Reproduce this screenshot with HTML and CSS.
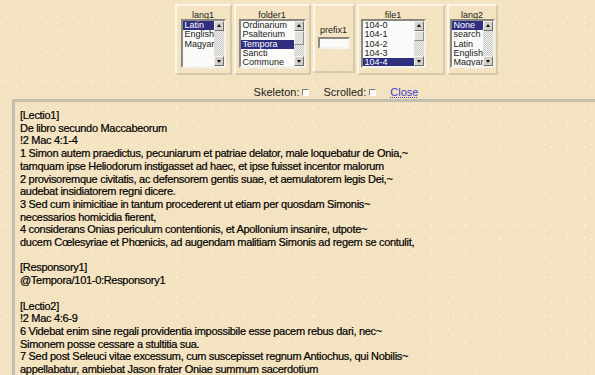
FILE: index.html
```html
<!DOCTYPE html>
<html>
<head>
<meta charset="utf-8">
<link rel="stylesheet" href="styles.css">
</head>
<body>
<div class="page">
  <div class="pick">
    <div class="cell c-lang1">
      <div class="lbl">lang1</div>
      <div class="lb w-lang1">
        <div class="items">
          <div class="it sel">Latin</div>
          <div class="it">English</div>
          <div class="it">Magyar</div>
        </div>
        <div class="sb">
          <div class="btn up"></div>
          <div class="track"></div>
          <div class="btn down"></div>
        </div>
      </div>
    </div>
    <div class="cell c-folder1">
      <div class="lbl">folder1</div>
      <div class="lb w-folder1">
        <div class="items">
          <div class="it">Ordinarium</div>
          <div class="it">Psalterium</div>
          <div class="it sel">Tempora</div>
          <div class="it">Sancti</div>
          <div class="it">Commune</div>
        </div>
        <div class="sb">
          <div class="btn up"></div>
          <div class="thumb t-folder"></div>
          <div class="track"></div>
          <div class="btn down"></div>
        </div>
      </div>
    </div>
    <div class="cell c-prefix1">
      <div class="lbl">prefix1</div>
      <div class="inp"></div>
    </div>
    <div class="cell c-file1">
      <div class="lbl">file1</div>
      <div class="lb w-file1">
        <div class="items">
          <div class="it">104-0</div>
          <div class="it">104-1</div>
          <div class="it">104-2</div>
          <div class="it">104-3</div>
          <div class="it sel">104-4</div>
        </div>
        <div class="sb">
          <div class="btn up"></div>
          <div class="thumb t-file"></div>
          <div class="track"></div>
          <div class="btn down"></div>
        </div>
      </div>
    </div>
    <div class="cell c-lang2">
      <div class="lbl">lang2</div>
      <div class="lb w-lang2">
        <div class="items">
          <div class="it sel">None</div>
          <div class="it">search</div>
          <div class="it">Latin</div>
          <div class="it">English</div>
          <div class="it">Magyar</div>
        </div>
        <div class="sb">
          <div class="btn up"></div>
          <div class="track"></div>
          <div class="btn down"></div>
        </div>
      </div>
    </div>
  </div>

  <div class="opts">
    <span>Skeleton:</span><span class="cb"></span>
    <span class="gap"></span>
    <span>Scrolled:</span><span class="cb"></span>
    <a class="close" href="#">Close</a>
  </div>

  <div class="text">[Lectio1]
De libro secundo Maccabeorum
!2 Mac 4:1-4
1 Simon autem praedictus, pecuniarum et patriae delator, male loquebatur de Onia,~
tamquam ipse Heliodorum instigasset ad haec, et ipse fuisset incentor malorum
2 provisoremque civitatis, ac defensorem gentis suae, et aemulatorem legis Dei,~
audebat insidiatorem regni dicere.
3 Sed cum inimicitiae in tantum procederent ut etiam per quosdam Simonis~
necessarios homicidia fierent,
4 considerans Onias periculum contentionis, et Apollonium insanire, utpote~
ducem Cœlesyriae et Phœnicis, ad augendam malitiam Simonis ad regem se contulit,

[Responsory1]
@Tempora/101-0:Responsory1

[Lectio2]
!2 Mac 4:6-9
6 Videbat enim sine regali providentia impossibile esse pacem rebus dari, nec~
Simonem posse cessare a stultitia sua.
7 Sed post Seleuci vitae excessum, cum suscepisset regnum Antiochus, qui Nobilis~
appellabatur, ambiebat Jason frater Oniae summum sacerdotium</div>
</div>
</body>
</html>
```

FILE: styles.css
```css
html, body {
  margin: 0;
  padding: 0;
  overflow: hidden;
}
body {
  font-family: "Liberation Sans", Arial, sans-serif;
  color: #111;
  height: 375px;
  background-color: #f4e3c0;
  background-image:
    radial-gradient(circle at 40% 30%, rgba(255,255,255,.55) 0.5px, transparent 1px),
    radial-gradient(circle at 70% 60%, rgba(255,255,255,.45) 0.5px, transparent 1px),
    radial-gradient(circle at 20% 80%, rgba(255,255,255,.4) 0.5px, transparent 1px);
  background-size: 17px 13px, 23px 19px, 11px 29px;
}
.page {
  width: 672px;
  display: flex;
  flex-direction: column;
  align-items: center;
}
.pick {
  margin-top: 4px;
  display: flex;
  gap: 2px;
}
.cell {
  height: 58px;
  border: 2px solid;
  border-color: #fcf6e8 #d6caae #d6caae #fcf6e8;
  padding: 4px 0 5px;
  display: flex;
  flex-direction: column;
  align-items: center;
}
.c-lang1 { width: 53px; }
.c-folder1 { width: 73px; }
.c-prefix1 { width: 38px; justify-content: center; padding-top: 2px; }
.c-file1 { width: 82px; align-items: flex-start; padding-left: 2px; }
.c-file1 .lbl { width: 65px; }
.c-lang2 { width: 47px; }
.lbl {
  font-size: 9px;
  line-height: 11px;
  height: 9px;
  text-align: center;
  color: #222;
}
.c-prefix1 .lbl { height: 11px; }
.lb {
  height: 45px;
  border: 2px solid;
  border-color: #8a8780 #f4f2ee #f4f2ee #8a8780;
  background: #fafaf8;
  display: flex;
  overflow: hidden;
}
.w-lang1, .w-lang2 { width: 41px; }
.w-folder1 { width: 63px; }
.w-file1 { width: 61px; }
.items {
  flex: 1;
  min-width: 0;
}
.it {
  font-size: 9px;
  line-height: 9.25px;
  height: 9.25px;
  padding-left: 2px;
  white-space: nowrap;
  overflow: hidden;
  color: #222;
}
.it.sel {
  background: #2f2f80;
  color: #fff;
}
.sb {
  width: 10px;
  display: flex;
  flex-direction: column;
  background-color: #f4f4f2;
  background-image:
    linear-gradient(45deg, #c8c6c0 25%, transparent 25%, transparent 75%, #c8c6c0 75%),
    linear-gradient(45deg, #c8c6c0 25%, transparent 25%, transparent 75%, #c8c6c0 75%);
  background-size: 2px 2px;
  background-position: 0 0, 1px 1px;
}
.btn {
  height: 8px;
  background: #d4d0c8;
  border: 1px solid;
  border-color: #f4f4f4 #707070 #707070 #f4f4f4;
  position: relative;
}
.btn::after {
  content: "";
  position: absolute;
  left: 2px;
  top: 2px;
  border-left: 2.5px solid transparent;
  border-right: 2.5px solid transparent;
}
.btn.up::after { border-bottom: 3px solid #111; }
.btn.down::after { border-top: 3px solid #111; top: 3px; }
.thumb {
  background: #e2dfd8;
  border: 1px solid;
  border-color: #f8f8f8 #909090 #909090 #f8f8f8;
}
.t-folder { height: 12px; }
.t-file { height: 8px; }
.track { flex: 1; }
.inp {
  margin-top: 1px;
  width: 28px;
  height: 8px;
  border: 2px solid;
  border-color: #8a8780 #f4f2ee #f4f2ee #8a8780;
  background: #fafaf8;
}
.opts {
  margin-top: 11px;
  font-size: 11px;
  line-height: 13px;
  display: flex;
  align-items: center;
  color: #222;
}
.cb {
  width: 5px;
  height: 5px;
  margin-left: 3px;
  border: 1px solid;
  border-color: #808080 #fff #fff #808080;
  background: #fafaf8;
}
.gap { width: 14px; }
.close {
  margin-left: 14px;
  color: #3838c8;
  text-decoration: underline dotted;
}
.text {
  align-self: flex-start;
  margin: 0 0 0 12px;
  width: 700px;
  height: 300px;
  border-top: 3px solid #c4beb0;
  border-left: 3px solid #c4beb0;
  padding: 7px 5px;
  font-size: 11px;
  line-height: 12.7px;
  letter-spacing: -0.3px;
  white-space: pre;
  color: #000;
  -webkit-text-stroke: 0.2px #000;
}
```
